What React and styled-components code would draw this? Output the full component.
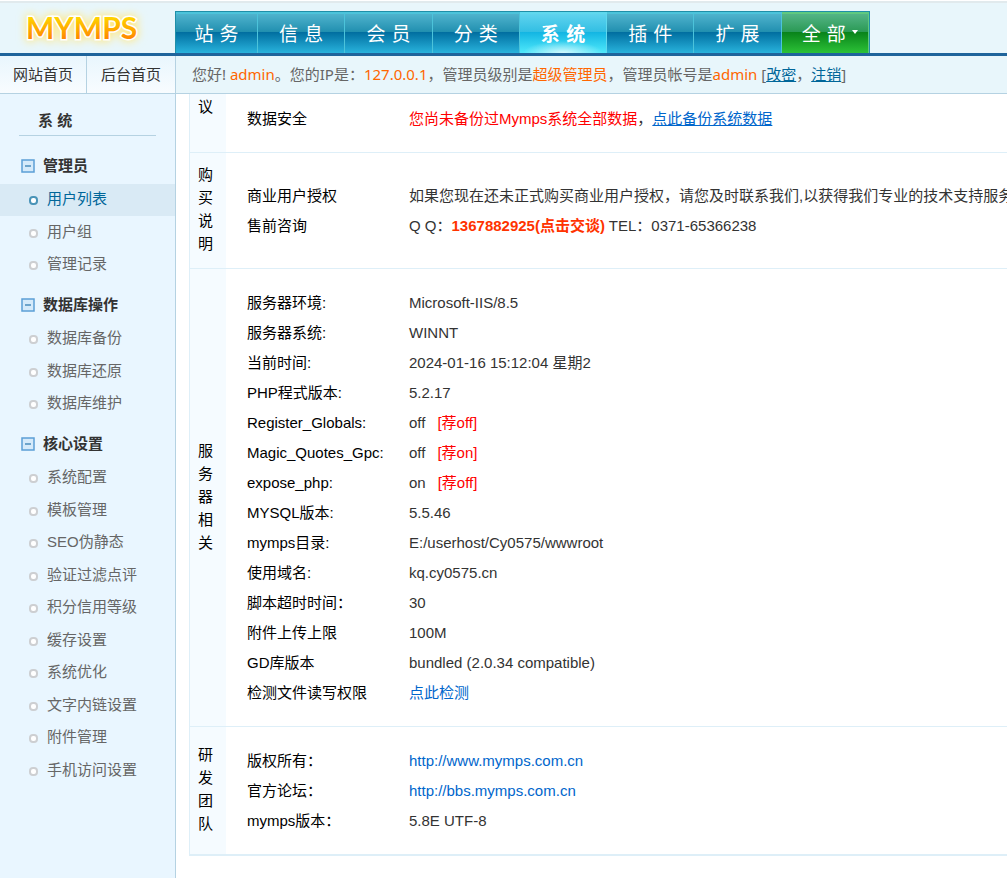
import React from 'react';
import styled, { createGlobalStyle, css } from 'styled-components';

const GlobalStyle = createGlobalStyle`
  *,
  *::before {
    box-sizing: border-box;
  }
  body {
    margin: 0;
    background: #fff;
    color: #333;
    font-family: 'Liberation Sans', 'Noto Sans CJK SC', sans-serif;
    font-size: 15px;
  }
  a {
    text-decoration: none;
  }
  ul {
    list-style: none;
    margin: 0;
    padding: 0;
  }
`;

const Page = styled.div`
  display: flex;
  flex-direction: column;
  min-height: 100vh;
  overflow-x: hidden;
`;

/*---------- header ----------*/
const Header = styled.header`
  display: flex;
  align-items: flex-end;
  height: 56px;
  background: linear-gradient(#fff 1px, #e1eaed 1px, #e1eaed 3px, #e8f6fb 3px);
  border-bottom: 3px solid #1f649b;
`;

const Logo = styled.a`
  flex: 0 0 175px;
  height: 50px;

  svg {
    display: block;
  }
`;

const Nav = styled.nav`
  display: grid;
  grid-template-columns: 82px repeat(7, 1fr);
  width: 695px;
  height: 42px;
  border: 1px solid #1f8fa8;
  border-bottom: none;
  font-family: 'DejaVu Sans', 'Noto Sans CJK SC', sans-serif;
`;

const tabColors = {
  normal: css`
    background: linear-gradient(#4fb3cd, #2290b0 45%, #006d9f 46%, #29b3dc);
    border-color: #4cc3da;
  `,
  active: css`
    background: radial-gradient(
        ellipse 40px 12px at 50% 100%,
        rgba(255, 255, 255, 0.75),
        transparent
      ),
      linear-gradient(#5fd3ee, #33bfe4 45%, #12b4e2 46%, #4fe9fb);
    border-color: #5fd8ee;
    font-weight: bold;
  `,
  green: css`
    background: linear-gradient(#54b487, #2b9a55 45%, #08821a 46%, #2cc237);
    border-color: #5fc980;
    padding-left: 10px;
  `,
};

const NavLink = styled.a`
  display: flex;
  align-items: center;
  justify-content: center;
  gap: 6px;
  color: #fff;
  font-size: 19px;
  line-height: 38px;
  white-space: nowrap;
  border-style: solid;
  border-width: 2px 1px 0 0;
  ${({ $kind }) => tabColors[$kind || 'normal']}
`;

const Caret = styled.span`
  margin-bottom: 4px;
  border: 3px solid transparent;
  border-top: 4px solid #fff;
  border-bottom: none;
`;

/*---------- bar under the header ----------*/
const Bar = styled.div`
  display: flex;
  height: 38px;
  line-height: 36px;
  background: #e8f6fb;
  border-bottom: 1px solid #b5d2e2;
  font-family: 'Noto Sans', 'Noto Sans CJK SC', sans-serif;
`;

const Shortcuts = styled.div`
  display: grid;
  grid-template-columns: 87px 1fr;
  flex: 0 0 176px;
  background: linear-gradient(#e9f6fd, #f8fcff);
`;

const Shortcut = styled.a`
  color: #333;
  text-align: center;
  border-right: 1px solid #b5d2e2;
`;

const Welcome = styled.div`
  padding-left: 16px;
  color: #666;
  white-space: nowrap;

  em {
    color: #ff6600;
    font-style: normal;
  }
  a {
    color: #006699;
    text-decoration: underline;
  }
`;

/*---------- sidebar ----------*/
const Body = styled.div`
  display: flex;
  flex: 1;
`;

const Sidebar = styled.aside`
  flex: 0 0 176px;
  background: #e9f6ff;
  border-right: 1px solid #b5d2e2;
`;

const SideTitle = styled.h2`
  margin: 10px 19px 6px;
  padding: 2px 0 0 19px;
  font-size: 15px;
  line-height: 29px;
  border-bottom: 1px solid #b5d2e2;
`;

const GroupTitle = styled.h3`
  display: flex;
  align-items: center;
  gap: 8px;
  margin: 0;
  padding: 8px 0 2px 21px;
  font-size: 15px;
  line-height: 32px;
`;

const SideItem = styled.li`
  height: 32px;
  line-height: 30px;

  &:nth-child(even) {
    height: 33px;
  }

  a {
    display: flex;
    align-items: center;
    gap: 9px;
    height: 100%;
    padding: 0 0 2px 29px;
    color: ${({ $active }) => ($active ? '#006699' : '#666')};
    background: ${({ $active }) => ($active ? '#d9eaf5' : 'none')};
  }

  a::before {
    content: '';
    width: 9px;
    height: 9px;
    margin-top: 3px;
    border: 2px solid ${({ $active }) => ($active ? '#4a94b8' : '#cdcfd2')};
    border-radius: 4px;
    background: #fff;
  }
`;

/*---------- content ----------*/
const Main = styled.main`
  flex: 1;
  min-width: 0;
  padding-left: 13px;
  overflow: hidden;
`;

const Panel = styled.div`
  min-width: 840px;
  border-left: 1px solid #deeff8;
  border-bottom: 1px solid #deeff8;
`;

const SectionName = styled.h3`
  display: flex;
  align-items: center;
  margin: 0;
  padding: 10px 0 13px 8px;
  background: #f5fbff;
  color: #000;
  font-size: 15px;
  font-weight: normal;
  line-height: 23px;

  span {
    width: 15px;
  }
`;

const Section = styled.section`
  display: grid;
  grid-template-columns: 36px 1fr;
  border-bottom: 1px solid #deeff8;

  ${({ $scrolled }) =>
    $scrolled &&
    css`
      height: 59px;
      align-content: end;
      overflow: hidden;

      ${SectionName} {
        align-items: flex-start;
      }
    `}
`;

const InfoTable = styled.table`
  align-self: center;
  margin: 19px 0 18px 21px;
  border-collapse: collapse;
  line-height: 30px;
  white-space: nowrap;

  th,
  td {
    height: 30px;
    padding: 0;
    text-align: left;
  }
  th {
    width: 162px;
    color: #000;
    font-weight: normal;
  }
`;

const TextLink = styled.a`
  color: #0066cc;
  text-decoration: ${({ $underline }) => ($underline ? 'underline' : 'none')};
`;

const Warn = styled.span`
  color: #ff0000;
`;

const Advice = styled(Warn)`
  margin-left: 12px;
`;

const QQLink = styled.a`
  color: #ff3300;
  font-weight: bold;
`;

const menu = [
  { title: '管理员', items: ['用户列表', '用户组', '管理记录'] },
  { title: '数据库操作', items: ['数据库备份', '数据库还原', '数据库维护'] },
  {
    title: '核心设置',
    items: [
      '系统配置',
      '模板管理',
      'SEO伪静态',
      '验证过滤点评',
      '积分信用等级',
      '缓存设置',
      '系统优化',
      '文字内链设置',
      '附件管理',
      '手机访问设置',
    ],
  },
];

const tabs = ['站 务', '信 息', '会 员', '分 类', '系 统', '插 件', '扩 展'];

const safety = [
  [
    '数据安全',
    <>
      <Warn>您尚未备份过Mymps系统全部数据</Warn>，
      <TextLink href="#" $underline>
        点此备份系统数据
      </TextLink>
    </>,
  ],
];

const purchase = [
  [
    '商业用户授权',
    '如果您现在还未正式购买商业用户授权，请您及时联系我们,以获得我们专业的技术支持服务',
  ],
  [
    '售前咨询',
    <>
      Q Q：<QQLink href="#">1367882925(点击交谈)</QQLink> TEL：0371-65366238
    </>,
  ],
];

const server = [
  ['服务器环境:', 'Microsoft-IIS/8.5'],
  ['服务器系统:', 'WINNT'],
  ['当前时间:', '2024-01-16 15:12:04 星期2'],
  ['PHP程式版本:', '5.2.17'],
  ['Register_Globals:', <>off<Advice>[荐off]</Advice></>],
  ['Magic_Quotes_Gpc:', <>off<Advice>[荐on]</Advice></>],
  ['expose_php:', <>on<Advice>[荐off]</Advice></>],
  ['MYSQL版本:', '5.5.46'],
  ['mymps目录:', 'E:/userhost/Cy0575/wwwroot'],
  ['使用域名:', 'kq.cy0575.cn'],
  ['脚本超时时间：', '30'],
  ['附件上传上限', '100M'],
  ['GD库版本', 'bundled (2.0.34 compatible)'],
  ['检测文件读写权限', <TextLink href="#">点此检测</TextLink>],
];

const team = [
  ['版权所有：', <TextLink href="#">http://www.mymps.com.cn</TextLink>],
  ['官方论坛：', <TextLink href="#">http://bbs.mymps.com.cn</TextLink>],
  ['mymps版本：', '5.8E UTF-8'],
];

const MinusIcon = () => (
  <svg width="14" height="14" viewBox="0 0 14 14" aria-hidden="true">
    <rect x="1" y="1" width="12" height="12" fill="#d5eafa" stroke="#5b9fd6" strokeWidth="1.5" />
    <path d="M4 7h6" stroke="#4a8dbb" strokeWidth="1.5" />
  </svg>
);

const InfoSection = ({ name, rows, scrolled }) => (
  <Section $scrolled={scrolled}>
    <SectionName>
      <span>{name}</span>
    </SectionName>
    <InfoTable>
      <tbody>
        {rows.map(([label, value]) => (
          <tr key={label}>
            <th scope="row">{label}</th>
            <td>{value}</td>
          </tr>
        ))}
      </tbody>
    </InfoTable>
  </Section>
);

const App = () => {
  return (
    <>
      <GlobalStyle />
      <Page>
        <Header>
          <Logo href="#" aria-label="MYMPS">
            <svg width="175" height="50" viewBox="0 0 175 50">
              <defs>
                <linearGradient id="gold" x1="0" y1="0" x2="0" y2="1">
                  <stop offset="0.2" stopColor="#ffd800" />
                  <stop offset="0.8" stopColor="#ff8a00" />
                </linearGradient>
                <filter id="glow" x="-20%" y="-50%" width="140%" height="200%">
                  <feGaussianBlur stdDeviation="4" />
                </filter>
              </defs>
              <g fontFamily="Lato, sans-serif" fontSize="30" fontWeight="700">
                <text x="26" y="36" fill="#ffe98a" stroke="#ffe98a" strokeWidth="5" filter="url(#glow)">
                  MYMPS
                </text>
                <text x="26" y="36" fill="url(#gold)" stroke="#fff" strokeWidth="3" paintOrder="stroke">
                  MYMPS
                </text>
              </g>
            </svg>
          </Logo>
          <Nav>
            {tabs.map((tab) => (
              <NavLink key={tab} href="#" $kind={tab === '系 统' ? 'active' : 'normal'}>
                {tab}
              </NavLink>
            ))}
            <NavLink href="#" $kind="green">
              全 部
              <Caret />
            </NavLink>
          </Nav>
        </Header>

        <Bar>
          <Shortcuts>
            <Shortcut href="#">网站首页</Shortcut>
            <Shortcut href="#">后台首页</Shortcut>
          </Shortcuts>
          <Welcome>
            您好! <em>admin</em>。您的IP是：<em>127.0.0.1</em>
            ，管理员级别是<em>超级管理员</em>
            ，管理员帐号是<em>admin</em> [<a href="#">改密</a>，
            <a href="#">注销</a>]
          </Welcome>
        </Bar>

        <Body>
          <Sidebar>
            <SideTitle>系 统</SideTitle>
            {menu.map((group) => (
              <React.Fragment key={group.title}>
                <GroupTitle>
                  <MinusIcon />
                  {group.title}
                </GroupTitle>
                <ul>
                  {group.items.map((item) => (
                    <SideItem key={item} $active={item === '用户列表'}>
                      <a href="#">{item}</a>
                    </SideItem>
                  ))}
                </ul>
              </React.Fragment>
            ))}
          </Sidebar>

          <Main>
            <Panel>
              <InfoSection name="议" rows={safety} scrolled />
              <InfoSection name="购买说明" rows={purchase} />
              <InfoSection name="服务器相关" rows={server} />
              <InfoSection name="研发团队" rows={team} />
            </Panel>
          </Main>
        </Body>
      </Page>
    </>
  );
};

export default App;
